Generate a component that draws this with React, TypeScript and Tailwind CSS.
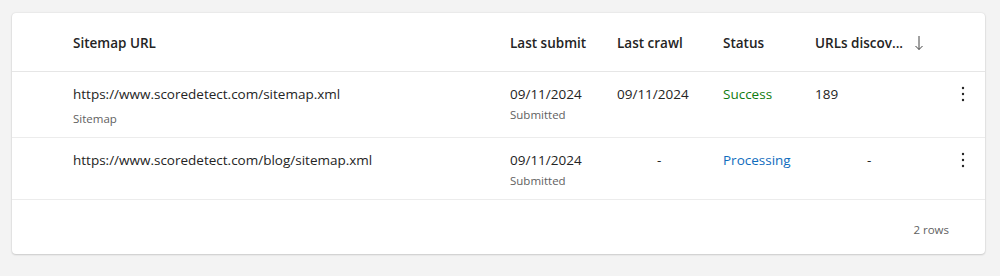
const rows = [
  {
    url: 'https://www.scoredetect.com/sitemap.xml',
    type: 'Sitemap',
    submitted: '09/11/2024',
    crawl: '09/11/2024',
    status: 'Success',
    urls: '189',
  },
  {
    url: 'https://www.scoredetect.com/blog/sitemap.xml',
    type: '',
    submitted: '09/11/2024',
    crawl: '-',
    status: 'Processing',
    urls: '-',
  },
];

const Kebab = () => (
  <svg width="4" height="16" viewBox="0 0 4 16" className="text-[#242424]">
    <circle cx="2" cy="2" r="1.2" fill="currentColor" />
    <circle cx="2" cy="8" r="1.2" fill="currentColor" />
    <circle cx="2" cy="14" r="1.2" fill="currentColor" />
  </svg>
);

const SortArrow = () => (
  <svg width="10" height="16" viewBox="0 0 10 16" className="text-[#424242]">
    <path d="M5 1v13.5M1.5 11l3.5 3.5 3.5-3.5" fill="none" stroke="currentColor" strokeWidth="1" />
  </svg>
);

const App = () => {
  return (
    <div className="w-[1000px] h-[276px] bg-[#f3f3f3] pt-[13px] pl-[12px] font-['Segoe_UI','Open_Sans',sans-serif] text-[#242424]">
      <div className="w-[973px] bg-white rounded-[4px] shadow-[0_0_2px_rgba(0,0,0,0.12),0_1px_2px_rgba(0,0,0,0.14)]">
        {/* Header */}
        <div className="flex items-center h-[59px] pt-[2px] pl-[61px] border-b border-[#e6e6e6] text-[13.5px] font-semibold">
          <div className="w-[437px]">Sitemap URL</div>
          <div className="w-[107px]">Last submit</div>
          <div className="w-[106px]">Last crawl</div>
          <div className="w-[92px]">Status</div>
          <div className="flex items-center gap-[11px]">
            <span>URLs discov...</span>
            <SortArrow />
          </div>
        </div>

        {rows.map((r) => (
          <div key={r.url} className="flex pl-[61px] pr-[20px] pt-[12px] pb-[10px] border-b border-[#ececec] text-[13.5px] leading-[20px]">
            <div className="w-[437px]">
              <div>{r.url}</div>
              {r.type && <div className="mt-[7px] text-[11.5px] leading-[16px] text-[#616161]">{r.type}</div>}
            </div>
            <div className="w-[107px]">
              <div>{r.submitted}</div>
              <div className="mt-[3px] text-[11.5px] leading-[16px] text-[#616161]">Submitted</div>
            </div>
            <div className={`w-[106px] ${r.crawl === '-' ? 'pl-[40px]' : ''}`}>{r.crawl}</div>
            <div className={`w-[92px] ${r.status === 'Success' ? 'text-[#107c10]' : 'text-[#0f6cbd]'}`}>{r.status}</div>
            <div className={`flex-1 ${r.urls === '-' ? 'pl-[52px]' : ''}`}>{r.urls}</div>
            <div className="pt-[2px]">
              <Kebab />
            </div>
          </div>
        ))}

        {/* Footer */}
        <div className="flex justify-end items-center h-[54px] pr-[36px] pt-[6px] text-[11.5px] text-[#616161]">
          2 rows
        </div>
      </div>
    </div>
  );
};

export default App;
